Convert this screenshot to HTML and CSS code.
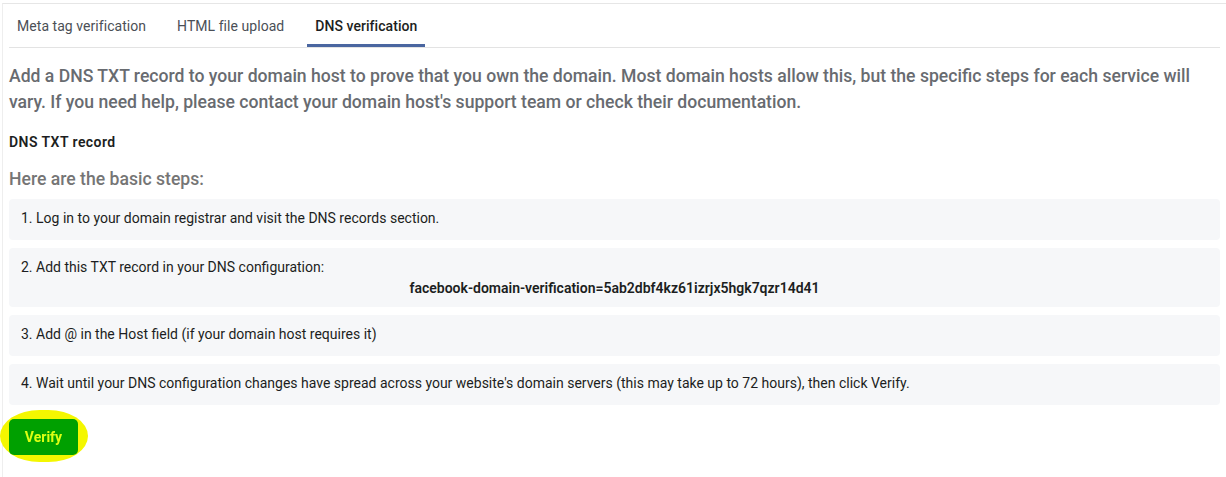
FILE: index.html
```html
<!DOCTYPE html>
<html>
<head>
<meta charset="utf-8">
<link rel="stylesheet" href="styles.css">
</head>
<body>
<div class="frame">
  <div class="panel">
    <nav class="tabs">
      <div class="tab">Meta tag verification</div>
      <div class="tab">HTML file upload</div>
      <div class="tab active">DNS verification</div>
    </nav>
    <p class="intro">Add a DNS TXT record to your domain host to prove that you own the domain. Most domain hosts allow this, but the specific steps for each service will vary. If you need help, please contact your domain host's support team or check their documentation.</p>
    <h3 class="label">DNS TXT record</h3>
    <h2 class="steps-title">Here are the basic steps:</h2>
    <ol class="steps">
      <li class="step">1. Log in to your domain registrar and visit the DNS records section.</li>
      <li class="step step-tall">2. Add this TXT record in your DNS configuration:
        <div class="record">facebook-domain-verification=5ab2dbf4kz61izrjx5hgk7qzr14d41</div>
      </li>
      <li class="step">3. Add @ in the Host field (if your domain host requires it)</li>
      <li class="step">4. Wait until your DNS configuration changes have spread across your website's domain servers (this may take up to 72 hours), then click Verify.</li>
    </ol>
    <div class="actions">
      <span class="highlight"><button class="verify">Verify</button></span>
    </div>
  </div>
</div>
</body>
</html>
```
FILE: styles.css
```css
html, body {
  margin: 0;
  padding: 0;
  background: #fff;
}
body {
  font-family: Roboto, "Liberation Sans", Arial, sans-serif;
  width: 1226px;
  height: 477px;
  overflow: hidden;
}
.frame {
  padding: 3px 0 0 2px;
}
.panel {
  border-top: 1px solid #e6e6e6;
  border-left: 1px solid #eeeeee;
  padding: 0 6px 0 6px;
  height: 480px;
}
.tabs {
  display: flex;
  border-bottom: 1px solid #e3e3e3;
  height: 43px;
  padding-left: 0;
}
.tab {
  font-size: 14px;
  color: #4b4f56;
  padding: 14px 8px 0 8px;
  margin-right: 15px;
  letter-spacing: 0.05px;
}
.tab.active {
  color: #1c1e21;
  font-weight: 500;
  border-bottom: 3px solid #4a66a0;
  margin-bottom: -1px;
  height: 26px;
}
.intro {
  margin: 15px 0 0 0;
  font-size: 17.6px;
  line-height: 26px;
  font-weight: 500;
  color: #686b70;
}
.label {
  margin: 17px 0 0 0;
  font-size: 14px;
  font-weight: 600;
  letter-spacing: 0.45px;
  color: #1c1e21;
  line-height: 20px;
}
.steps-title {
  margin: 15px 0 0 0;
  font-size: 17.6px;
  font-weight: 500;
  color: #757575;
  line-height: 24px;
}
.steps {
  list-style: none;
  margin: 8px 0 0 0;
  padding: 0;
  display: flex;
  flex-direction: column;
  gap: 8px;
}
.step {
  background: #f6f7f9;
  border-radius: 4px;
  font-size: 14px;
  color: #1c1e21;
  padding: 10px 12px 0 12px;
  height: 31px;
  line-height: 19px;
}
.step-tall {
  height: 49px;
}
.record {
  text-align: center;
  font-weight: 600;
  margin-top: 2px;
}
.actions {
  margin-top: 5px;
}
.highlight {
  display: inline-block;
  background: #f4f700;
  border-radius: 45% / 50%;
  padding: 9px 10px 7px 9px;
  margin-left: -9px;
  filter: blur(0.4px);
}
.verify {
  display: block;
  background: #00a000;
  color: #dcff14;
  border: none;
  border-radius: 5px;
  width: 69px;
  height: 36px;
  font-family: Roboto, "Liberation Sans", Arial, sans-serif;
  font-weight: 700;
  font-size: 14px;
  padding: 0;
}
```
